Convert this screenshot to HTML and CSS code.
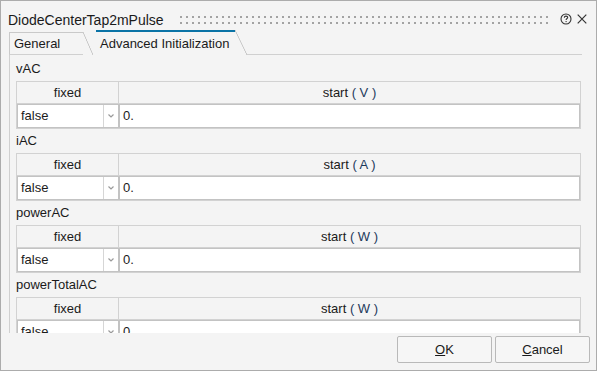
FILE: index.html
```html
<!DOCTYPE html>
<html>
<head>
<meta charset="utf-8">
<link rel="stylesheet" href="styles.css">
</head>
<body>
<div class="window">
  <div class="titlebar">
    <span class="title">DiodeCenterTap2mPulse</span>
    <div class="grip"></div>
    <svg class="help" width="12" height="12" viewBox="0 0 12 12">
      <circle cx="6" cy="6" r="5" fill="none" stroke="#333" stroke-width="1.1"/>
      <path d="M4.3 4.7 C4.3 3.6 5 3.1 6 3.1 C7 3.1 7.7 3.7 7.7 4.5 C7.7 5.5 6.1 5.6 6.1 6.9" fill="none" stroke="#333" stroke-width="1.1"/>
      <circle cx="6.1" cy="8.6" r="0.7" fill="#333"/>
    </svg>
    <svg class="close" width="10" height="10" viewBox="0 0 10 10">
      <path d="M0.7 0.7 L9.3 9.3 M9.3 0.7 L0.7 9.3" stroke="#333" stroke-width="1.2"/>
    </svg>
  </div>
  <div class="tabs">
    <div class="tab general">General</div>
    <div class="tab active">Advanced Initialization</div>
    <div class="tabline"></div>
  </div>
  <div class="panel">
    <div class="group">
      <div class="label">vAC</div>
      <div class="tbl">
        <div class="th first">fixed</div>
        <div class="th">start <span class="unit">( V )</span></div>
        <div class="sel"><span class="val">false</span><span class="arrow"><svg width="6" height="4" viewBox="0 0 6 4"><path d="M0.5 0.5 L3 3 L5.5 0.5" fill="none" stroke="#9a9a9a" stroke-width="1.2"/></svg></span></div>
        <div class="inp">0.</div>
      </div>
    </div>
    <div class="group">
      <div class="label">iAC</div>
      <div class="tbl">
        <div class="th first">fixed</div>
        <div class="th">start <span class="unit">( A )</span></div>
        <div class="sel"><span class="val">false</span><span class="arrow"><svg width="6" height="4" viewBox="0 0 6 4"><path d="M0.5 0.5 L3 3 L5.5 0.5" fill="none" stroke="#9a9a9a" stroke-width="1.2"/></svg></span></div>
        <div class="inp">0.</div>
      </div>
    </div>
    <div class="group">
      <div class="label">powerAC</div>
      <div class="tbl">
        <div class="th first">fixed</div>
        <div class="th">start <span class="unit">( W )</span></div>
        <div class="sel"><span class="val">false</span><span class="arrow"><svg width="6" height="4" viewBox="0 0 6 4"><path d="M0.5 0.5 L3 3 L5.5 0.5" fill="none" stroke="#9a9a9a" stroke-width="1.2"/></svg></span></div>
        <div class="inp">0.</div>
      </div>
    </div>
    <div class="group">
      <div class="label">powerTotalAC</div>
      <div class="tbl">
        <div class="th first">fixed</div>
        <div class="th">start <span class="unit">( W )</span></div>
        <div class="sel"><span class="val">false</span><span class="arrow"><svg width="6" height="4" viewBox="0 0 6 4"><path d="M0.5 0.5 L3 3 L5.5 0.5" fill="none" stroke="#9a9a9a" stroke-width="1.2"/></svg></span></div>
        <div class="inp">0.</div>
      </div>
    </div>
  </div>
  <div class="footer">
    <button class="btn"><u>O</u>K</button>
    <button class="btn"><u>C</u>ancel</button>
  </div>
</div>
</body>
</html>
```
FILE: styles.css
```css
html, body {
  margin: 0;
  padding: 0;
  background: #f4f4f4;
}

.window {
  width: 597px;
  height: 371px;
  box-sizing: border-box;
  border: 1px solid #acacac;
  background: #f4f4f4;
  display: flex;
  flex-direction: column;
  overflow: hidden;
  font-family: "Liberation Sans", Arial, sans-serif;
  font-size: 13px;
  color: #1b1b1b;
}

.titlebar {
  height: 29px;
  box-sizing: border-box;
  display: flex;
  align-items: flex-start;
  padding: 11px 9px 0 7px;
  flex: none;
}

.title {
  font-size: 14px;
  line-height: 16px;
  color: #1a1a1a;
}

.grip {
  flex: 1;
  height: 8px;
  margin: 4px 12px 0 16px;
  background-image: conic-gradient(from 270deg at 2px 2px, #a3a3a3 25%, transparent 0);
  background-size: 6px 6px;
}

.help {
  margin-top: 1px;
  margin-right: 5px;
}

.close {
  margin-top: 2px;
}

.tabs {
  height: 25px;
  flex: none;
  display: flex;
  align-items: flex-end;
  padding: 0 14px 0 8px;
}

.tab {
  position: relative;
  box-sizing: border-box;
  line-height: 18px;
  color: #1a1a1a;
}

.tab::after {
  content: "";
  position: absolute;
  top: -1px;
  bottom: 0;
  right: -10px;
  width: 10px;
  background: linear-gradient(to top right, transparent calc(50% - 0.7px), #c9c9c9 calc(50% - 0.2px), #c9c9c9 calc(50% + 0.2px), transparent calc(50% + 0.7px));
}

.general {
  width: 74px;
  height: 23px;
  border-top: 1px solid #c9c9c9;
  border-left: 1px solid #c9c9c9;
  border-bottom: 1px solid #d0d0d0;
  padding: 2px 0 0 4px;
  margin-right: 13px;
}

.general::after {
  bottom: -1px;
}

.active {
  width: 139px;
  height: 25px;
  border-top: 2px solid #0a73a6;
  padding: 3px 0 0 4px;
  margin-right: 12px;
}

.active::after {
  top: -2px;
  right: -12px;
  width: 12px;
}

.tabline {
  flex: 1;
  height: 0;
  border-bottom: 1px solid #d0d0d0;
}

.panel {
  flex: 1;
  overflow: hidden;
  margin-left: 8px;
  border-left: 1px solid #d0d0d0;
  padding: 2px 0 0 6px;
}

.group {
  width: 565px;
}

.label {
  height: 24px;
  line-height: 24px;
  color: #1a1a1a;
}

.tbl {
  display: grid;
  grid-template-columns: 102px 1fr;
  border: 1px solid #d2d2d2;
}

.th {
  height: 22px;
  box-sizing: border-box;
  border-bottom: 1px solid #d2d2d2;
  text-align: center;
  line-height: 22px;
  color: #1a1a1a;
}

.th.first {
  border-right: 1px solid #d2d2d2;
}

.unit {
  color: #1d3a5c;
}

.sel, .inp {
  height: 24px;
  box-sizing: border-box;
  background: #fff;
  border: 1px solid #c3c3c3;
  line-height: 22px;
}

.sel {
  display: flex;
}

.val {
  flex: 1;
  padding-left: 3px;
  border-right: 1px solid #d6d6d6;
}

.arrow {
  width: 14px;
  display: flex;
  align-items: center;
  justify-content: center;
}

.inp {
  padding-left: 3px;
}

.footer {
  height: 37px;
  flex: none;
  box-sizing: border-box;
  display: flex;
  justify-content: flex-end;
  gap: 3px;
  padding: 3px 6px 0 0;
}

.btn {
  width: 95px;
  height: 27px;
  box-sizing: border-box;
  border: 1px solid #b9b9b9;
  border-radius: 2px;
  background: #f6f6f6;
  font-family: "Liberation Sans", Arial, sans-serif;
  font-size: 13px;
  color: #1a1a1a;
  padding: 0;
}
```
